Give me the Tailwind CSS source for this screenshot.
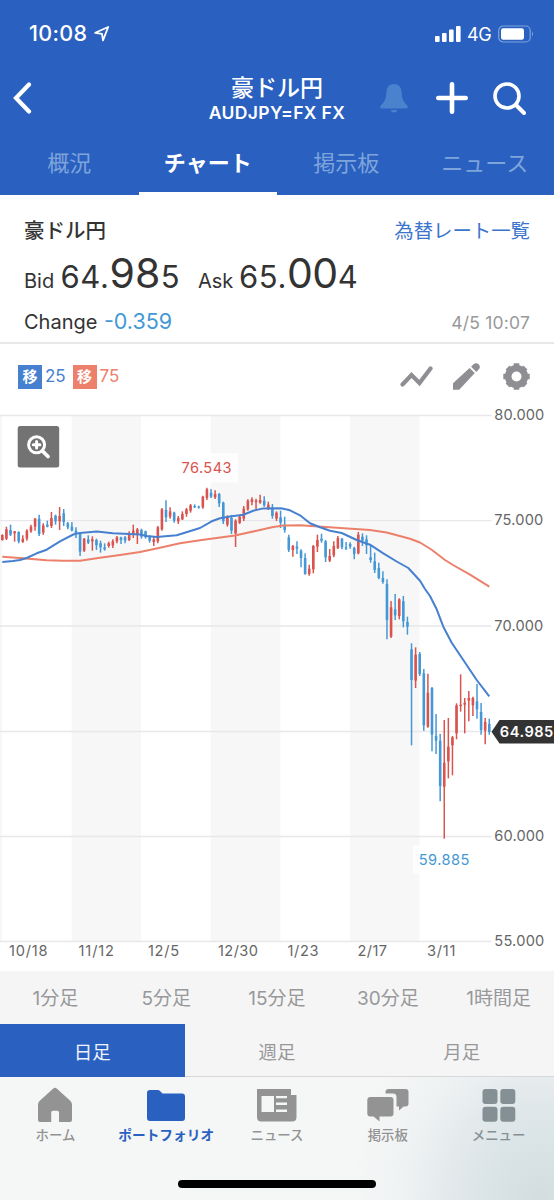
<!DOCTYPE html>
<html lang="ja">
<head>
  <meta charset="UTF-8" />
  <meta name="viewport" content="width=device-width, initial-scale=1.0" />
  <title>豪ドル円 チャート</title>
  <script src="https://cdn.jsdelivr.net/npm/@tailwindcss/browser@4"></script>
</head>
<body class="bg-white font-['Inter','Noto_Sans_CJK_JP',sans-serif] text-[#333]">
  <div class="w-[554px] h-[1200px] flex flex-col overflow-hidden">

    <!-- Header -->
    <header class="h-[195px] shrink-0 bg-[#2a61c0] text-white flex flex-col">
      <div class="h-[68px] shrink-0 pl-[29px] pr-[20px] flex items-center justify-between">
        <div class="flex items-center gap-[6px]">
          <span class="w-[59px] text-[21.500px] tracking-[0.3px] font-medium leading-none">10:08</span>
          <svg width="16" height="16" viewBox="0 0 16 16" fill="none" stroke="currentColor" stroke-width="1.8" stroke-linejoin="round"><path d="M1.2 6.8 14.2 1 9 14.4 8 7.8Z" /></svg>
        </div>
        <div class="flex items-center">
          <svg width="26" height="16" viewBox="0 0 26 16" fill="currentColor"><rect x="0" y="10" width="4.6" height="6" rx="1" /><rect x="7" y="7" width="4.6" height="9" rx="1" /><rect x="14" y="3.5" width="4.6" height="12.5" rx="1" /><rect x="21" y="0" width="4.6" height="16" rx="1" /></svg>
          <span class="ml-[6px] mt-[2px] text-[18px] leading-none w-[24px] tracking-tight">4G</span>
          <svg class="ml-[7px]" width="36" height="18" viewBox="0 0 36 18"><rect x=".7" y="1" width="31.5" height="16" rx="4.5" fill="none" stroke="#7fa3dc" stroke-width="1.2" /><rect x="3" y="3.2" width="23" height="11.6" rx="2.2" fill="#fff" /><path d="M34 6.5q2 2.5 0 5Z" fill="#7fa3dc" /></svg>
        </div>
      </div>

      <div class="h-[63px] shrink-0 pb-[3px] px-[12px] grid grid-cols-[1fr_150px_1fr] items-center">
        <svg width="21" height="32" viewBox="0 0 21 32" fill="none" stroke="currentColor" stroke-width="4.2" stroke-linecap="round" stroke-linejoin="miter"><path d="M17 2.500 4 16 17 29.500" /></svg>
        <div class="pt-[3px] text-center">
          <h1 class="text-[23px] font-medium leading-[26px]">豪ドル円</h1>
          <p class="mt-[1px] text-[17.500px] tracking-[0.35px] font-semibold leading-[22px] whitespace-nowrap">AUDJPY=FX FX</p>
        </div>
        <div class="flex items-center justify-end pr-[16px]">
          <svg class="mr-[28px]" width="28" height="29" viewBox="0 0 28 29" fill="#4a82ce"><path d="M14 0C8.500 0 6.500 4 6.300 9C6 16 4 18 1 21.300C-.5 23 .2 24.600 2 24.600H26C27.800 24.600 28.500 23 27 21.300C24 18 22 16 21.700 9C21.500 4 19.500 0 14 0Z" /><path d="M10.500 26H17.500Q16.500 28.500 14 28.500T10.500 26Z" /></svg>
          <svg class="mr-[25px]" width="32" height="32" viewBox="0 0 32 32" stroke="currentColor" stroke-width="4.6" stroke-linecap="round"><path d="M16 2.300V29.700M2.300 16H29.700" /></svg>
          <svg width="33" height="33" viewBox="0 0 33 33" fill="none" stroke="currentColor" stroke-width="3.600" stroke-linecap="round"><circle cx="14" cy="14" r="12" /><path d="M23.500 23.500 31 31" stroke-width="4" /></svg>
        </div>
      </div>

      <nav class="h-[64px] shrink-0 grid grid-cols-4 text-[22px] text-[#7ea4dc] text-center leading-[64px]">
        <a class="h-[64px]">概況</a>
        <a class="h-[64px] text-white font-bold border-b-[3px] border-white">チャート</a>
        <a class="h-[64px]">掲示板</a>
        <a class="h-[64px]">ニュース</a>
      </nav>
    </header>

    <!-- Quote -->
    <section class="h-[149px] shrink-0 px-[24px] pt-[21px] border-b-2 border-[#e8e8e8]">
      <div class="flex justify-between items-center leading-[30px]">
        <h2 class="text-[20.5px] font-medium">豪ドル円</h2>
        <a class="text-[19.4px] text-[#3b74cc]">為替レート一覧</a>
      </div>
      <div class="mt-[5px] h-[44px] flex items-baseline leading-[44px]">
        <span class="w-[36.500px] text-[20px]">Bid</span>
        <span class="w-[137.500px] text-[31px] tracking-[0.6px]">64.<span class="text-[41px] tracking-[0.2px]">98</span>5</span>
        <span class="w-[41px] text-[20px]">Ask</span>
        <span class="text-[31px] tracking-[0.6px]">65.<span class="text-[41px] tracking-[-0.5px]">00</span>4</span>
      </div>
      <div class="mt-[11px] flex items-baseline leading-[30px]">
        <span class="text-[20px]">Change</span>
        <span class="ml-[6.500px] text-[21.500px] text-[#4598d6]">-0.359</span>
        <span class="ml-auto text-[17.500px] tracking-[0.2px] text-[#999]">4/5 10:07</span>
      </div>
    </section>

    <!-- Chart toolbar -->
    <div class="h-[51px] shrink-0 pt-[14px] pl-[18px] pr-[24px] flex items-center text-[17px]">
      <span class="size-[24px] bg-[#4680cf] text-white text-[15px] font-bold text-center leading-[23px]">移</span>
      <span class="w-[30.500px] pl-[3px] text-[#4680cf]">25</span>
      <span class="size-[24px] bg-[#ec806b] text-white text-[15px] font-bold text-center leading-[23px]">移</span>
      <span class="pl-[3px] text-[#ec806b]">75</span>
      <div class="ml-auto flex items-center text-[#8e8e93]">
        <svg class="mr-[20px]" width="33" height="22" viewBox="0 0 33 22" fill="none" stroke="currentColor" stroke-width="4.200" stroke-linecap="round" stroke-linejoin="miter"><path d="M2.500 18.500 11.500 9 19.500 17 30.500 2.500" /></svg>
        <svg class="mr-[23px]" width="27" height="27" viewBox="0 0 27 27" fill="currentColor"><path d="M0 20.300 16.600 4.900 21.800 10.100 6.200 26.700H0Z" /><path d="M18.100 3.800 20.500 1.300Q23-.8 25.600 1.300Q28 4 25.800 6.300L23.400 9Z" /></svg>
        <svg width="27" height="27" viewBox="0 0 27 27" fill="none" stroke="currentColor"><circle cx="13.500" cy="13.500" r="8.300" stroke-width="6.600" /><path d="M13.500 .3V5M13.500 22V26.700M.3 13.500H5M22 13.500H26.700M4.600 4.600 7.500 7.500M19.500 19.500 22.400 22.400M4.600 22.400 7.500 19.500M19.500 7.500 22.400 4.600" stroke-width="5.600" /></svg>
      </div>
    </div>

    <!-- Chart -->
    <svg id="chart" class="block shrink-0" width="554" height="576" viewBox="0 395 554 576">
      <g fill="#f7f7f7">
        <rect x="0" y="415" width="2" height="527" />
        <rect x="71.700" y="415" width="69.300" height="527" />
        <rect x="210.700" y="415" width="69.700" height="527" />
        <rect x="350" y="415" width="69.500" height="527" />
      </g>
      <path d="M0 415.500H491.500M0 520.700H491.500M0 626H491.500M0 731.500H491.500M0 836.500H491.500M0 941.500H491.500" stroke="#e8e8ea" stroke-width="1.300" />
      <rect x="175" y="453" width="63" height="29.500" fill="#fff" fill-opacity=".7" />
      <rect x="413" y="845" width="63" height="29" fill="#fff" fill-opacity=".7" />
      <g id="candles"></g>
      <polyline fill="none" stroke="#ec806b" stroke-width="2" stroke-linejoin="round" points="2.300,556.700 23,558.300 46.700,560.300 63,560.800 80,560.700 100,557.700 120,555 140,552 160,547.700 180,543.200 200,540.300 235,535.500 256.700,530.700 272,527.300 283.300,525.500 300,525.300 336.700,527.700 370,529.900 386.700,532.500 410,538.700 420,542.500 432,550 445,560 453,565 470,574.700 489.300,586.700" />
      <polyline fill="none" stroke="#4680cf" stroke-width="2" stroke-linejoin="round" points="2.300,562 13,561 20,560 26.700,558 36.700,553.300 46.700,549.700 60,541.300 73.300,534.500 80,532.900 96.700,531.600 113,533.300 140,534.500 146.700,536 156.700,537 176.700,535.300 200,528 211.700,521.300 220,518.300 230,516.500 243.300,514.700 253.300,510.700 263.300,508.400 281,508.300 290,510.300 300,515.300 310,523.300 320,527.300 330,530.700 341.700,533 356.700,540 370,544.700 383.300,553.300 396.700,561.500 408.300,568 420,580.700 425,589 430,596 436.700,609.300 443.300,626.700 451.700,642.700 463.300,660 476.700,680 489.300,696.300" />

      <g font-size="14.600" fill="#666">
        <text x="494.300" y="420" textLength="50">80.000</text>
        <text x="494.300" y="525.300" textLength="49">75.000</text>
        <text x="494.300" y="630.500" textLength="49">70.000</text>
        <text x="494.300" y="840.800" textLength="50">60.000</text>
        <text x="494.300" y="946" textLength="50">55.000</text>
        <text x="9" y="956.300" textLength="38.500">10/18</text>
        <text x="78.500" y="956.300" textLength="35.500">11/12</text>
        <text x="148" y="956.300" textLength="31">12/5</text>
        <text x="218" y="956.300" textLength="40">12/30</text>
        <text x="287.500" y="956.300" textLength="31">1/23</text>
        <text x="357.500" y="956.300" textLength="29.500">2/17</text>
        <text x="427" y="956.300" textLength="28.500">3/11</text>
      </g>
      <g font-size="14.600">
        <text x="181.500" y="473.300" textLength="50" fill="#d9534f">76.543</text>
        <text x="418.800" y="865.200" textLength="50.500" fill="#4598d6">59.885</text>
      </g>
      <path d="M491.500 731.700 499.500 720H554V743.500H499.500Z" fill="#333" />
      <text x="499.800" y="737.300" textLength="53.500" font-size="14.600" font-weight="600" fill="#fff">64.985</text>

      <!-- zoom button -->
      <rect x="17.700" y="426" width="41.500" height="41.500" rx="2.500" fill="#737373" />
      <g fill="none" stroke="#fff" stroke-width="3">
        <circle cx="36.600" cy="444.800" r="8" />
        <path d="M42.500 451 48 456.500" stroke-width="3.800" stroke-linecap="round" />
        <path d="M33.300 444.800H39.900M36.600 441.500V448.100" stroke-width="3" stroke-linecap="round" />
      </g>
    </svg>

    <!-- Interval selector -->
    <div class="h-[53px] shrink-0 bg-[#f5f5f5] grid grid-cols-5 text-center text-[19px] text-[#98989b] leading-[56px]">
      <a>1分足</a><a>5分足</a><a>15分足</a><a>30分足</a><a>1時間足</a>
    </div>
    <div class="h-[53px] shrink-0 bg-[#f5f5f5] grid grid-cols-3 text-center text-[18.500px] text-[#98989b] leading-[56px]">
      <a class="h-[53px] bg-[#2a61c0] text-[#eef3fb]">日足</a>
      <a class="h-[53px] border-b border-[#d8d8d8]">週足</a>
      <a class="h-[53px] border-b border-[#d8d8d8]">月足</a>
    </div>

    <!-- Tab bar -->
    <footer class="flex-1 flex flex-col items-center bg-[radial-gradient(ellipse_190px_230px_at_540px_125px,#d3dcdf_0%,#dbe4e7_30%,#e4eaec_50%,#eff2f3_72%,#f5f6f6_100%)] text-[#939393]">
      <div class="w-full h-[103px] shrink-0 pt-[10px] grid grid-cols-5 text-center text-[13.400px] font-medium leading-[20px]">
        <a class="flex flex-col items-center gap-[2px]">
          <svg width="36" height="36" viewBox="0 0 36 36" fill="currentColor"><path d="M16 1.700Q18 0 20 1.700L33.500 14Q35 15.500 35 17.500V33Q35 35 33 35H22V25.500Q22 23.700 20.200 23.700H16.200Q14.200 23.700 14.200 25.500V35H3Q1 35 1 33V17.500Q1 15.500 2.500 14Z" /></svg>
          ホーム
        </a>
        <a class="flex flex-col items-center gap-[2px] text-[#2a61c0] font-bold whitespace-nowrap text-[13.700px]">
          <svg width="40" height="36" viewBox="0 0 40 36" fill="currentColor"><path d="M4 3H12Q13.500 3 15 5L16.500 6.500H36Q39 6.500 39 9.500V31Q39 34 36 34H4Q1 34 1 31V6Q1 3 4 3Z" /></svg>
          ポートフォリオ
        </a>
        <a class="flex flex-col items-center gap-[2px]">
          <svg width="40" height="36" viewBox="0 0 40 36" fill="currentColor"><path fill-rule="evenodd" d="M0 2H34V8H39.500V30Q39.500 34.500 35 34.500H4.500Q0 34.500 0 30ZM4.500 9V25H17V9ZM19 9V11.300H30V9ZM19 15.500V18H30V15.500ZM19 22.500V25H30V22.500Z" /></svg>
          ニュース
        </a>
        <a class="flex flex-col items-center gap-[2px]">
          <svg width="42" height="36" viewBox="0 0 42 36" fill="currentColor"><path d="M22 2H38.500Q41.500 2 41.500 5V16.500Q41.500 19.500 38.500 19.500H36.500L32 23.500V19.500H29.500V10Q29.500 6.500 26 6.500H18.500V5Q18.500 2 22 2Z" /><path d="M3.500 10H23.500Q26.500 10 26.500 13V26.500Q26.500 29.500 23.500 29.500H12.500V34.500L6.500 29.500H3.500Q.3 29.500 .3 26.500V13Q.3 10 3.500 10Z" /></svg>
          掲示板
        </a>
        <a class="flex flex-col items-center gap-[2px] text-[#849093]">
          <svg width="34" height="36" viewBox="0 0 34 36" fill="currentColor"><rect x=".5" y="2" width="15" height="15" rx="3" /><rect x="18.300" y="2" width="15" height="15" rx="3" /><rect x=".5" y="19.800" width="15" height="15" rx="3" /><rect x="18.300" y="19.800" width="15" height="15" rx="3" /></svg>
          メニュー
        </a>
      </div>
      <div class="w-[198px] h-[8px] rounded-full bg-black"></div>
    </footer>
  </div>

  <script>
    // Candles in blocks. Each: direction (1 up, 0 down), high, body top, body bottom, low.
    // Values are thirds of a pixel below the block's base.
    const blocks = [
      { base: 460, rows: [
        [1,223,225,240,242],[1,200,208,236,240],[0,194,210,224,228],[1,213,214,220,245],[0,214,216,244,250],
        [1,226,236,246,248],[1,208,212,236,242],[1,194,200,214,218],[1,174,176,200,212],[0,164,176,222,228],
        [1,190,196,218,224],[0,182,194,200,202],[1,156,174,198,204],[0,164,167,184,194],[1,141,168,184,210],
        [0,147,160,186,198],[0,186,190,202,208],[0,186,200,212,214],[0,202,212,222,234],[0,220,222,275,288],
        [1,234,236,272,276],[0,226,238,248,252],[1,229,238,244,272],[0,236,240,256,270],[0,242,250,262,278],
        [0,250,262,268,272],[1,245,250,258,263],[1,238,244,256,264],[1,228,232,244,250],[0,230,232,240,252],
        [0,228,232,242,250],[1,214,224,240,243],[1,194,212,222,234],[1,204,208,222,252]
      ] },
      { base: 450, rows: [
        [0,236,240,260,266],[0,242,244,262,266],[0,256,260,272,278],[1,260,268,276,288],[1,228,232,274,280],
        [1,174,178,238,242],[0,151,180,202,216],[1,172,184,200,206],[0,185,188,212,218],[1,198,204,214,222],
        [1,184,192,208,210],[1,174,178,192,200],[1,162,166,182,188],[0,163,168,172,174],[0,167,170,173,176],
        [1,137,140,172,176],[1,113,118,144,150],[0,117,128,140,144],[1,121,132,142,147],[0,129,132,160,171],
        [0,155,158,214,222],[1,196,200,224,230],[0,195,204,242,252],[1,208,212,250,291],[1,198,200,218,222],
        [1,168,176,206,213],[1,148,152,178,182],[1,142,148,156,166],[1,146,152,156,178],[1,134,150,158,161],
        [0,139,152,166,170],[1,155,164,176,180],[0,162,172,198,206],[1,184,188,206,213]
      ] },
      { base: 480, rows: [
        [0,92,112,128,144],[0,110,134,150,158],[0,164,172,210,216],[1,195,198,210,230],[0,184,200,206,222],
        [0,208,212,234,262],[0,220,234,282,284],[1,254,266,282,287],[1,195,198,268,280],[1,164,180,200,216],
        [0,161,176,182,188],[0,180,184,232,246],[1,207,228,242,246],[1,184,198,226,232],[1,168,174,204,207],
        [0,174,176,202,208],[0,186,202,206,210],[0,187,192,200,206],[0,200,204,222,238],[1,156,164,220,223],
        [0,160,170,182,198],[0,166,178,196,222],[0,196,232,240,248],[0,218,244,270,279],[0,248,264,294,298],
        [0,274,294,306,311]
      ] },
      { base: 560, rows: [
        [0,58,72,180,238],[1,123,142,230,234],[0,102,148,166,180],[1,115,118,168,178],[0,108,124,184,202],
        [0,170,186,200,224],[0,250,268,360,556],[1,262,284,362,384],[0,276,282,342,348],[0,327,340,496,512],
        [1,341,398,500,503],[0,381,384,524,574],[0,462,528,542,582],[0,522,542,678,724],[1,480,608,680,836],
        [1,474,560,604,655],[1,528,532,556,646],[1,430,436,520,538],[1,343,434,438,455],[1,414,428,434,520],
        [1,393,414,422,484],[1,410,414,436,468],[0,372,424,448,476],[0,429,456,510,524],[1,474,486,512,553],
        [0,476,492,516,524]
      ] }
    ];

    let x = 2.33;
    let html = "";
    blocks.forEach(({ base, rows }) => {
      rows.forEach(([up, high, top, bottom, low]) => {
        const y = (v) => base + v / 3;
        const color = up ? "#d9534f" : "#4598d6";
        html += `<path d="M${x} ${y(high)}V${y(low)}" stroke="${color}" stroke-width="1.5"/>`;
        html += `<path d="M${x} ${y(top)}V${y(bottom)}" stroke="${color}" stroke-width="2.6"/>`;
        x += 4.092;
      });
    });
    document.getElementById("candles").innerHTML = html;
  </script>
</body>
</html>
